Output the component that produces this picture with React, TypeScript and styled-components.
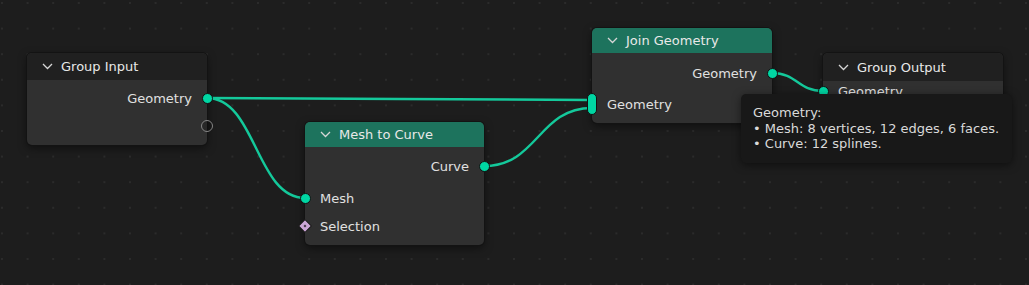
import styled, { createGlobalStyle, css } from 'styled-components';

const GlobalStyle = createGlobalStyle`
  html, body {
    margin: 0;
    padding: 0;
    background: #1d1d1d;
  }
`;

const Canvas = styled.div`
  position: relative;
  width: 1029px;
  height: 285px;
  overflow: hidden;
  background: #1d1d1d;
  font-family: 'DejaVu Sans', 'Liberation Sans', sans-serif;
  font-size: 13px;
  color: #e0e0e0;
`;

const Wires = styled.svg`
  position: absolute;
  left: 0;
  top: 0;
`;

const NodeBox = styled.div<{ $x: number; $y: number; $w: number }>`
  position: absolute;
  left: ${(p) => p.$x}px;
  top: ${(p) => p.$y}px;
  width: ${(p) => p.$w}px;
  display: flex;
  flex-direction: column;
  background: #303030;
  border-radius: 5px;
  box-shadow: 0 0 0 1px #131313, 0 3px 9px rgba(0, 0, 0, 0.5);
`;

const Header = styled.div<{ $h: number; $kind: 'group' | 'geo' }>`
  height: ${(p) => p.$h}px;
  display: flex;
  align-items: center;
  gap: 8px;
  padding-left: 15px;
  border-radius: 5px 5px 0 0;
  background: ${(p) => (p.$kind === 'geo' ? '#1d735d' : '#202020')};
  color: #e8e8e8;
`;

const Body = styled.div<{ $top: number; $bottom: number }>`
  display: flex;
  flex-direction: column;
  padding: ${(p) => p.$top}px 0 ${(p) => p.$bottom}px;
`;

const Row = styled.div<{ $side: 'in' | 'out'; $h?: number; $gap?: number }>`
  position: relative;
  height: ${(p) => p.$h ?? 28}px;
  margin-top: ${(p) => p.$gap ?? 0}px;
  display: flex;
  align-items: center;
  justify-content: ${(p) => (p.$side === 'out' ? 'flex-end' : 'flex-start')};
  padding: 0 15px;
`;

type SocketKind = 'geo' | 'empty' | 'bool' | 'multi';

const sizes: Record<SocketKind, [number, number]> = {
  geo: [11, 11],
  empty: [12, 12],
  bool: [10, 10],
  multi: [10, 22],
};

const Socket = styled.span<{ $side: 'in' | 'out'; $kind: SocketKind }>`
  position: absolute;
  top: 50%;
  box-sizing: border-box;
  width: ${(p) => sizes[p.$kind][0]}px;
  height: ${(p) => sizes[p.$kind][1]}px;
  margin-top: ${(p) => -sizes[p.$kind][1] / 2}px;
  ${(p) => (p.$side === 'out' ? 'right' : 'left')}: ${(p) => -sizes[p.$kind][0] / 2}px;
  border-radius: 6px;
  background: #00d6a3;
  border: 1px solid #111;

  ${(p) =>
    p.$kind === 'empty' &&
    css`
      background: rgba(0, 0, 0, 0.15);
      border: 1.5px solid #858585;
    `}

  ${(p) =>
    p.$kind === 'bool' &&
    css`
      border-radius: 1px;
      background: #cca6d6;
      border-color: #1a1a1a;
      transform: rotate(45deg);

      &::after {
        content: '';
        position: absolute;
        left: 3px;
        top: 3px;
        width: 2px;
        height: 2px;
        background: #3a2f3d;
      }
    `}
`;

const Tooltip = styled.div`
  position: absolute;
  left: 741px;
  top: 94px;
  width: 271px;
  height: 69px;
  box-sizing: border-box;
  padding: 11px 12px;
  background: #181818;
  border-radius: 5px;
  box-shadow: 0 2px 8px rgba(0, 0, 0, 0.5);
  line-height: 15.5px;
  color: #dadada;
  white-space: nowrap;
`;

const Chevron = () => (
  <svg width="11" height="7" viewBox="0 0 11 7">
    <polyline points="1,1 5.5,5.5 10,1" fill="none" stroke="#d6d6d6" strokeWidth="1.3" />
  </svg>
);

type Sock = { label: string; side: 'in' | 'out'; kind: SocketKind; h?: number; gap?: number };

type NodeDef = {
  title: string;
  kind: 'group' | 'geo';
  x: number;
  y: number;
  w: number;
  header: number;
  top: number;
  bottom: number;
  rows: Sock[];
};

const nodes: NodeDef[] = [
  {
    title: 'Group Input',
    kind: 'group',
    x: 27,
    y: 53,
    w: 180,
    header: 27,
    top: 4,
    bottom: 5,
    rows: [
      { label: 'Geometry', side: 'out', kind: 'geo' },
      { label: '', side: 'out', kind: 'empty' },
    ],
  },
  {
    title: 'Mesh to Curve',
    kind: 'geo',
    x: 305,
    y: 122,
    w: 179,
    header: 25,
    top: 5,
    bottom: 5,
    rows: [
      { label: 'Curve', side: 'out', kind: 'geo' },
      { label: 'Mesh', side: 'in', kind: 'geo', gap: 4 },
      { label: 'Selection', side: 'in', kind: 'bool' },
    ],
  },
  {
    title: 'Join Geometry',
    kind: 'geo',
    x: 592,
    y: 28,
    w: 180,
    header: 25,
    top: 6,
    bottom: 5,
    rows: [
      { label: 'Geometry', side: 'out', kind: 'geo' },
      { label: 'Geometry', side: 'in', kind: 'multi', gap: 3 },
    ],
  },
  {
    title: 'Group Output',
    kind: 'group',
    x: 823,
    y: 53,
    w: 180,
    header: 28,
    top: 0,
    bottom: 40,
    rows: [{ label: 'Geometry', side: 'in', kind: 'geo', h: 20 }],
  },
];

// handle length follows Blender's default noodle curving (half the horizontal distance)
const link = (x1: number, y1: number, x2: number, y2: number) => {
  const d = Math.abs(x2 - x1) * 0.5;
  return `M${x1} ${y1} C${x1 + d} ${y1}, ${x2 - d} ${y2}, ${x2} ${y2}`;
};

const links = [
  link(207, 98, 592, 100),
  link(207, 98, 305, 198),
  link(484, 166, 592, 108),
  link(772, 73, 823, 91),
];

export default function App() {
  return (
    <>
      <GlobalStyle />
      <Canvas>
        <Wires width="1029" height="285">
          <defs>
            <pattern id="dots" x="1" y="2" width="25.6" height="25.6" patternUnits="userSpaceOnUse">
              <rect width="2" height="2" fill="#2b2b2b" shapeRendering="crispEdges" />
            </pattern>
          </defs>
          <rect width="1029" height="285" fill="url(#dots)" />
          {links.map((d, i) => (
            <path key={i} d={d} fill="none" stroke="#14c99b" strokeWidth="2.4" />
          ))}
        </Wires>
        {nodes.map((n) => (
          <NodeBox key={n.title} $x={n.x} $y={n.y} $w={n.w}>
            <Header $h={n.header} $kind={n.kind}>
              <Chevron />
              <span>{n.title}</span>
            </Header>
            <Body $top={n.top} $bottom={n.bottom}>
              {n.rows.map((r, i) => (
                <Row key={i} $side={r.side} $h={r.h} $gap={r.gap}>
                  {r.label}
                  <Socket $side={r.side} $kind={r.kind} />
                </Row>
              ))}
            </Body>
          </NodeBox>
        ))}
        <Tooltip>
          <div>Geometry:</div>
          <div>• Mesh: 8 vertices, 12 edges, 6 faces.</div>
          <div>• Curve: 12 splines.</div>
        </Tooltip>
      </Canvas>
    </>
  );
}
